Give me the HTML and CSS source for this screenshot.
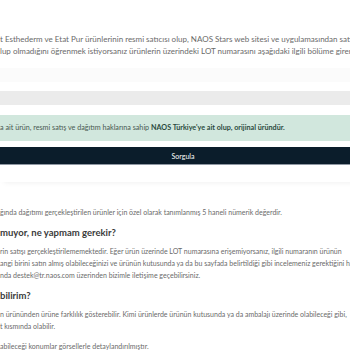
FILE: index.html
```html
<!DOCTYPE html>
<html lang="tr">
<head>
<meta charset="utf-8">
<link rel="stylesheet" href="styles.css">
</head>
<body>
<main class="page">
  <p class="intro">t Esthederm ve Etat Pur ürünlerinin resmi satıcısı olup, NAOS Stars web sitesi ve uygulamasından satın aldığınız ürünlerin<br>lup olmadığını öğrenmek istiyorsanız ürünlerin üzerindeki LOT numarasını aşağıdaki ilgili bölüme girerek Sorgula butonuna basınız.</p>

  <section class="card">
    <div class="field-top"></div>
    <div class="field-input"></div>
    <div class="alert">a ait ürün, resmi satış ve dağıtım haklarına sahip <b>NAOS Türkiye'ye ait olup, orijinal üründür.</b></div>
    <button class="btn">Sorgula</button>
  </section>

  <section class="faq">
    <p class="text first">ğında dağıtımı gerçekleştirilen ürünler için özel olarak tanımlanmış 5 haneli nümerik değerdir.</p>
    <h3 class="q">muyor, ne yapmam gerekir?</h3>
    <p class="text">rin satışı gerçekleştirilememektedir. Eğer ürün üzerinde LOT numarasına erişemiyorsanız, ilgili numaranın ürünün<br>angi birini satın almış olabileceğinizi ve ürünün kutusunda ya da bu sayfada belirtildiği gibi incelemeniz gerektiğini hatırlatırız.<br>nda destek@tr.naos.com üzerinden bizimle iletişime geçebilirsiniz.</p>
    <h3 class="q">bilirim?</h3>
    <p class="text">n ürününden ürüne farklılık gösterebilir. Kimi ürünlerde ürünün kutusunda ya da ambalajı üzerinde olabileceği gibi,<br>t kısmında olabilir.</p>
    <p class="text last">abileceği konumlar görsellerle detaylandırılmıştır.</p>
  </section>
</main>
</body>
</html>
```

FILE: styles.css
```css
html, body {
  margin: 0;
  padding: 0;
  background: #ffffff;
  overflow: hidden;
}

.page {
  width: 366px;
  font-family: "Lato", "Open Sans", sans-serif;
  color: #6a6a6a;
  font-size: 7px;
}

.intro {
  margin: 0;
  padding-top: 33px;
  font-size: 8px;
  line-height: 12px;
  white-space: nowrap;
}

.card {
  margin-top: 10px;
  padding: 1px 0 17px;
  display: flex;
  flex-direction: column;
  box-shadow: 0 4px 6px -4px rgba(0, 0, 0, 0.08);
}

.field-top {
  height: 14px;
  background: #fbfbfb;
}

.field-input {
  margin-top: 9px;
  height: 14px;
  background: #ebebeb;
}

.alert {
  margin-top: 10px;
  height: 26px;
  line-height: 26px;
  font-size: 7.2px;
  background: #d1e7dd;
  color: #4a5a52;
  white-space: nowrap;
}

.alert b {
  color: #2a4a3e;
  font-weight: 700;
}

.btn {
  margin-top: 6px;
  height: 18px;
  border: 0;
  border-bottom: 1px solid #8f98a3;
  background: #0b1d2b;
  color: #ffffff;
  font-family: inherit;
  font-size: 7px;
  padding: 0;
}

.faq {
  padding-top: 24px;
}

.text {
  margin: 0;
  line-height: 12px;
  white-space: nowrap;
}

.q {
  margin: 10px 0 5px;
  font-size: 9.5px;
  line-height: 14px;
  font-weight: 700;
  color: #3a3a3a;
}

.faq .text + .q {
  margin-top: 8px;
}

.last {
  margin-top: 8px;
}
```
